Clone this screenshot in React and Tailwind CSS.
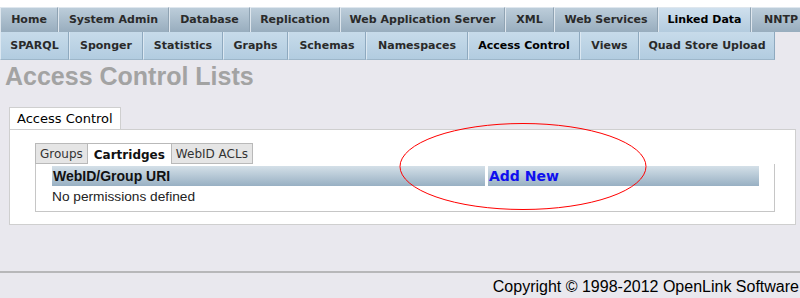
export default function App() {
  const row1 = [
    ["Home", 58],
    ["System Admin", 111],
    ["Database", 81],
    ["Replication", 90],
    ["Web Application Server", 165],
    ["XML", 49],
    ["Web Services", 104],
    ["Linked Data", 93, true],
    ["NNTP", 60],
  ];
  const row2 = [
    ["SPARQL", 69],
    ["Sponger", 74],
    ["Statistics", 80],
    ["Graphs", 65],
    ["Schemas", 78],
    ["Namespaces", 102],
    ["Access Control", 112, true],
    ["Views", 59],
    ["Quad Store Upload", 136],
  ];
  const dv = { fontFamily: '"DejaVu Sans", Verdana, sans-serif' };
  const ar = { fontFamily: '"Liberation Sans", Arial, sans-serif' };
  return (
    <div className="relative w-[800px] h-[298px] overflow-hidden bg-[#e9e8ee]" style={dv}>
      <div className="h-[7px] bg-white" />
      <div className="flex h-[25px] bg-white">
        {row1.map(([t, w, a]) => (
          <div
            key={t}
            style={{ width: w }}
            className={
              "shrink-0 flex items-center justify-center pt-[1px] text-[11px] font-bold border-l border-t border-[#dfe7ee] border-r border-r-[#8fa3b3] " +
              (a
                ? "bg-gradient-to-b from-[#cfe0ee] to-[#b3cbde] text-black"
                : "bg-gradient-to-b from-[#bccdda] to-[#98adbe] text-[#2a2a2a]")
            }
          >
            {t}
          </div>
        ))}
      </div>
      <div className="flex h-[28px]">
        {row2.map(([t, w, a]) => (
          <div
            key={t}
            style={{ width: w }}
            className={
              "shrink-0 flex items-center justify-center pt-[2px] text-[11px] font-bold border-l border-[#dce8f2] border-r border-r-[#8ea9bf] border-b border-b-[#9db6c9] bg-gradient-to-b from-[#c7dbea] to-[#b2cce0] " +
              (a ? "text-black" : "text-[#2a2a2a]")
            }
          >
            {t}
          </div>
        ))}
      </div>
      <div className="mt-[2px] pl-[5px] text-[25px] leading-[29px] font-bold text-[#a3a3a3]" style={ar}>
        Access Control Lists
      </div>
      <div className="ml-[9px] mt-[16px] w-[787px]">
        <div className="flex">
          <div className="h-[22px] px-[7px] bg-white border border-b-0 border-[#cfcfcf] text-[13px] leading-[21px] text-black">
            Access Control
          </div>
        </div>
        <div className="h-[96px] bg-white border border-[#cfcfcf] pl-[25px] pt-[13px]">
          <div className="flex text-[12px] leading-[18px]">
            <div className="h-[21px] px-[4px] pt-[1px] bg-[#e5e5e5] border border-[#b9b9b9] text-[#333]">Groups</div>
            <div className="h-[21px] px-[6px] bg-white border-t border-[#b9b9b9] font-bold text-[#111] pt-[2px]">Cartridges</div>
            <div className="h-[21px] px-[4px] pt-[1px] bg-[#e5e5e5] border border-[#b9b9b9] text-[#333]">WebID ACLs</div>
          </div>
          <div className="w-[740px] h-[48px] border border-t-0 border-[#c6c6c6] pl-[16px] pt-[2px]">
            <div className="flex h-[20px] w-[707px] gap-[3px]">
              <div
                className="w-[433px] bg-gradient-to-b from-[#d4e0e8] to-[#98b0c3] text-[14px] font-bold text-[#111] pl-[1px] leading-[20px]"
                style={ar}
              >
                WebID/Group URI
              </div>
              <div className="flex-1 bg-gradient-to-b from-[#d4e0e8] to-[#98b0c3] text-[14px] font-bold text-[#1010ee] pl-[1px] leading-[20px]">
                Add New
              </div>
            </div>
            <div className="text-[13.7px] leading-[20px] text-[#222] mt-[1px]" style={ar}>
              No permissions defined
            </div>
          </div>
        </div>
      </div>
      <div className="mt-[46px] border-t-2 border-[#b7b7b9]" />
      <div className="text-right pr-[1px] text-[16px] leading-[20px] mt-[4px] text-black" style={ar}>
        Copyright © 1998-2012 OpenLink Software
      </div>
      <svg className="absolute left-[399px] top-[122px]" width="250" height="90" viewBox="0 0 250 90">
        <ellipse cx="124" cy="44.5" rx="123" ry="43" fill="none" stroke="#ff0000" strokeWidth="1" />
      </svg>
    </div>
  );
}
